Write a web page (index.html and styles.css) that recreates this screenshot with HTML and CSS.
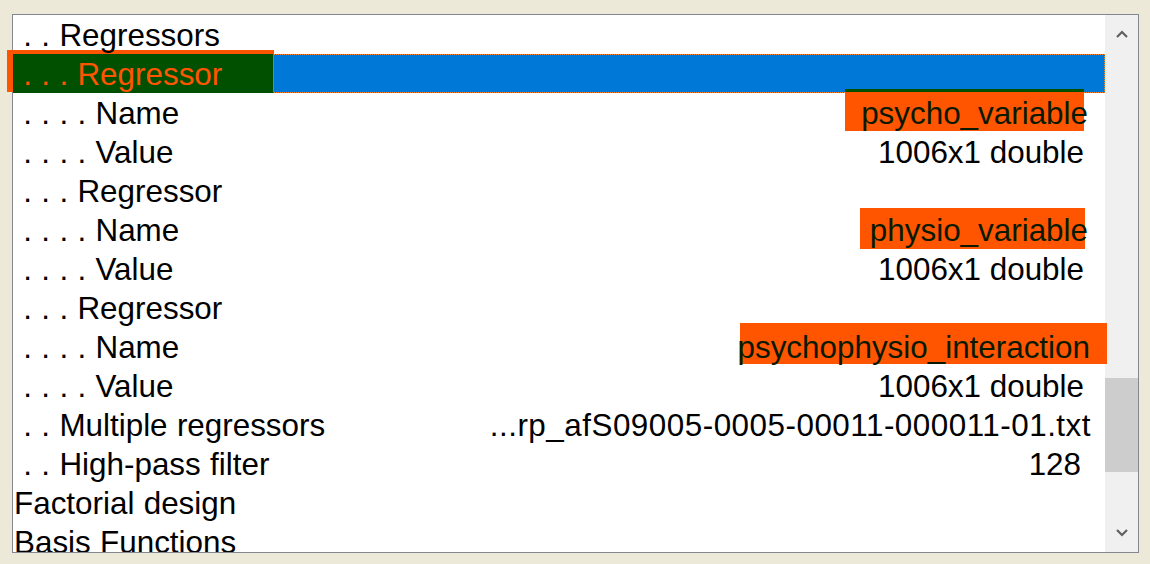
FILE: index.html
```html
<!DOCTYPE html>
<html>
<head>
<meta charset="utf-8">
<link rel="stylesheet" href="styles.css">
</head>
<body>
<div class="frame">
  <div class="listbox">
    <div class="rows">
      <div class="row"><span class="txt lbl"> . . Regressors</span></div>
      <div class="row sel"><span class="txt lbl"> . . . Regressor</span></div>
      <div class="row"><span class="txt lbl"> . . . . Name</span><span class="txt val hl v-psycho">psycho_variable</span></div>
      <div class="row"><span class="txt lbl"> . . . . Value</span><span class="txt val">1006x1 double</span></div>
      <div class="row"><span class="txt lbl"> . . . Regressor</span></div>
      <div class="row"><span class="txt lbl"> . . . . Name</span><span class="txt val hl v-physio">physio_variable</span></div>
      <div class="row"><span class="txt lbl"> . . . . Value</span><span class="txt val">1006x1 double</span></div>
      <div class="row"><span class="txt lbl"> . . . Regressor</span></div>
      <div class="row"><span class="txt lbl"> . . . . Name</span><span class="txt val hl v-inter">psychophysio_interaction</span></div>
      <div class="row"><span class="txt lbl"> . . . . Value</span><span class="txt val">1006x1 double</span></div>
      <div class="row"><span class="txt lbl"> . . Multiple regressors</span><span class="txt val v-file">...rp_afS09005-0005-00011-000011-01.txt</span></div>
      <div class="row"><span class="txt lbl"> . . High-pass filter</span><span class="txt val v-hpf">128</span></div>
      <div class="row"><span class="txt lbl">Factorial design</span></div>
      <div class="row"><span class="txt lbl">Basis Functions</span></div>
    </div>
    <div class="scrollbar">
      <div class="sb-btn">
        <svg width="12" height="8" viewBox="0 0 12 8"><polyline points="1,7 6,2 11,7" fill="none" stroke="#606060" stroke-width="2.2"/></svg>
      </div>
      <div class="sb-track"><div class="sb-thumb"></div></div>
      <div class="sb-btn">
        <svg width="12" height="8" viewBox="0 0 12 8"><polyline points="1,1 6,6 11,1" fill="none" stroke="#606060" stroke-width="2.2"/></svg>
      </div>
    </div>
  </div>
  <div class="mark mark-sel-outer"></div>
  <div class="mark mark-sel-inner"></div>
  <div class="mark mark-psycho"></div>
  <div class="mark mark-physio"></div>
  <div class="mark mark-inter"></div>
</div>
</body>
</html>
```

FILE: styles.css
```css
html, body {
  margin: 0;
  padding: 0;
}
body {
  background: #ece9d8;
  font-family: "Liberation Sans", Arial, sans-serif;
  width: 1150px;
  height: 564px;
  overflow: hidden;
}
.frame {
  position: relative;
  margin: 14px 0 0 12px;
  width: 1127px;
  height: 539px;
}
.listbox {
  box-sizing: border-box;
  width: 100%;
  height: 100%;
  border: 1px solid #828790;
  background: #ffffff;
  display: flex;
}
.rows {
  flex: 1;
  overflow: hidden;
}
.row {
  display: flex;
  justify-content: space-between;
  height: 39px;
  line-height: 39px;
  font-size: 31.4px;
  color: #000;
  padding: 0 21px 0 1px;
  white-space: pre;
}
.row.sel {
  background: #0078d7;
  outline: 1px dotted #ff8728;
  outline-offset: -1px;
}
.txt {
  position: relative;
  z-index: 2;
  top: 1px;
}
.lbl {
  word-spacing: 0.6px;
}
.sel .txt {
  color: #ff5500;
}
.hl {
  color: #0a1a00;
}
.v-psycho { margin-right: -4px; }
.v-physio { margin-right: -4px; }
.v-inter { margin-right: -6px; }
.v-file { margin-right: -7px; letter-spacing: 0.5px; }
.v-hpf { margin-right: 3px; }

.scrollbar {
  width: 33px;
  background: #f0f0f0;
  display: flex;
  flex-direction: column;
}
.sb-btn {
  height: 38px;
  display: flex;
  align-items: center;
  justify-content: center;
}
.sb-btn svg {
  display: block;
}
.sb-track {
  flex: 1;
}
.sb-thumb {
  margin-top: 325px;
  height: 94px;
  background: #cdcdcd;
}

.mark {
  position: absolute;
  z-index: 1;
}
.mark-sel-outer {
  left: -5px;
  top: 36px;
  width: 267px;
  height: 42px;
  background: #ff5500;
}
.mark-sel-inner {
  left: 1px;
  top: 40px;
  width: 260px;
  height: 39px;
  background: #005000;
}
.mark-psycho {
  left: 833px;
  top: 75px;
  width: 239px;
  height: 39px;
  border-top: 3px solid #005000;
  background: #ff5500;
}
.mark-physio {
  left: 848px;
  top: 194px;
  width: 225px;
  height: 41px;
  background: #ff5500;
}
.mark-inter {
  left: 728px;
  top: 309px;
  width: 367px;
  height: 41px;
  background: #ff5500;
}
```
